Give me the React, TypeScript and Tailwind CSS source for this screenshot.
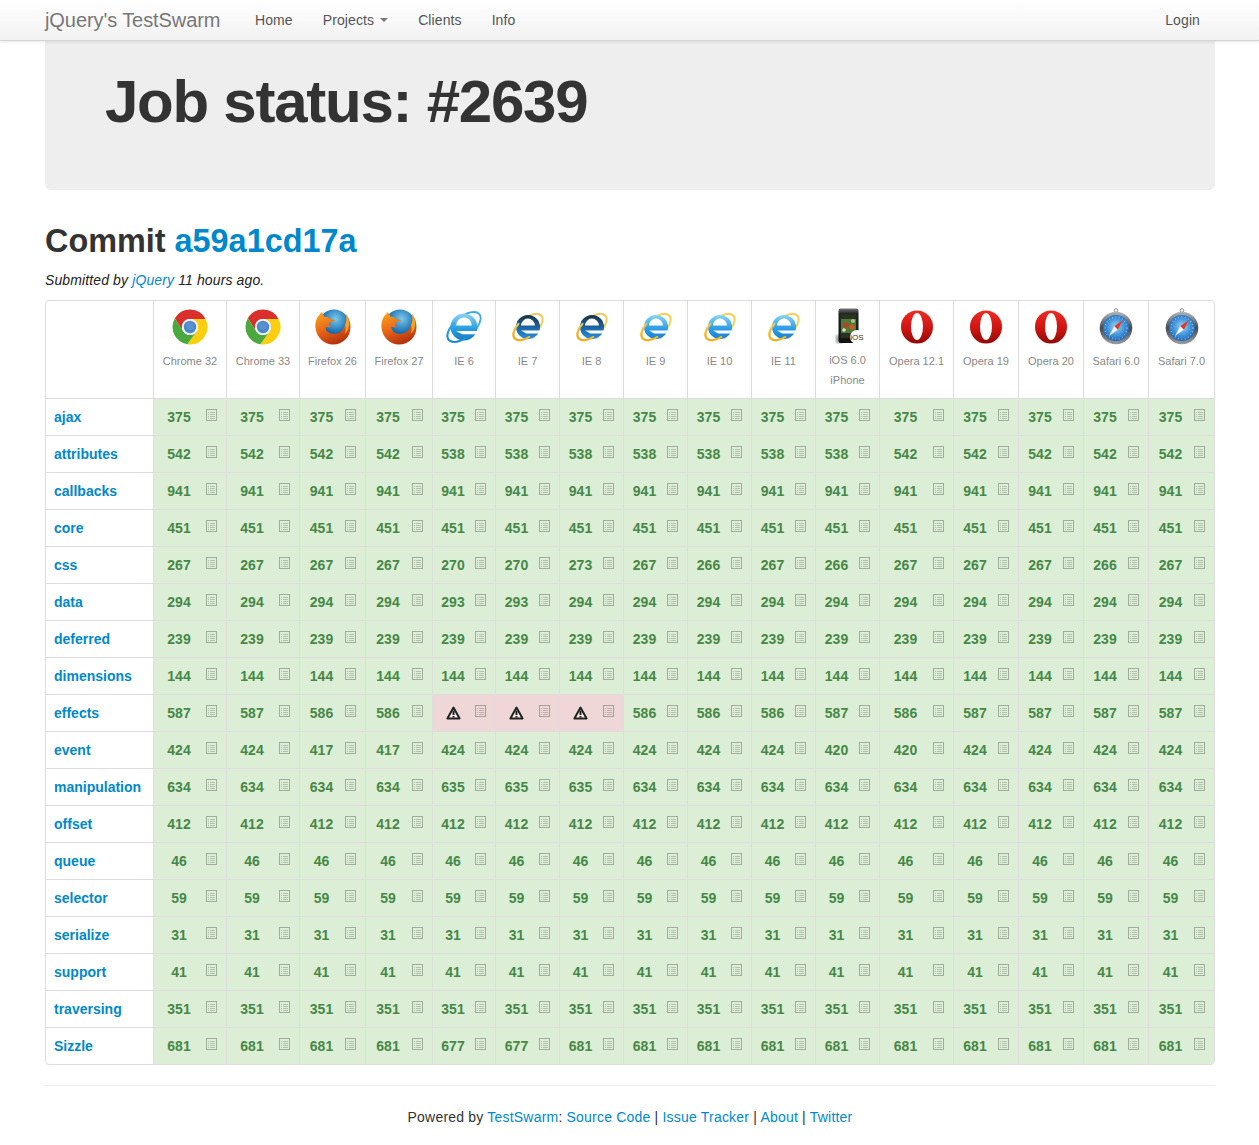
const F = 'fail';

const BROWSERS = [
    { name: 'Chrome 32', logo: 'chrome', w: 73 },
    { name: 'Chrome 33', logo: 'chrome', w: 73 },
    { name: 'Firefox 26', logo: 'firefox', w: 66 },
    { name: 'Firefox 27', logo: 'firefox', w: 67 },
    { name: 'IE 6', logo: 'ie6', w: 63 },
    { name: 'IE 7', logo: 'ie7', w: 64 },
    { name: 'IE 8', logo: 'ie7', w: 64 },
    { name: 'IE 9', logo: 'ie9', w: 64 },
    { name: 'IE 10', logo: 'ie9', w: 64 },
    { name: 'IE 11', logo: 'ie9', w: 64 },
    { name: 'iOS 6.0', sub: 'iPhone', logo: 'ios', w: 64 },
    { name: 'Opera 12.1', logo: 'opera', w: 74 },
    { name: 'Opera 19', logo: 'opera', w: 65 },
    { name: 'Opera 20', logo: 'opera', w: 65 },
    { name: 'Safari 6.0', logo: 'safari', w: 65 },
    { name: 'Safari 7.0', logo: 'safari', w: 66 },
];

const same = (n: number) => Array<number | string>(16).fill(n);

const ROWS: { name: string; cells: (number | string)[] }[] = [
    { name: 'ajax', cells: same(375) },
    { name: 'attributes', cells: [542, 542, 542, 542, 538, 538, 538, 538, 538, 538, 538, 542, 542, 542, 542, 542] },
    { name: 'callbacks', cells: same(941) },
    { name: 'core', cells: same(451) },
    { name: 'css', cells: [267, 267, 267, 267, 270, 270, 273, 267, 266, 267, 266, 267, 267, 267, 266, 267] },
    { name: 'data', cells: [294, 294, 294, 294, 293, 293, 294, 294, 294, 294, 294, 294, 294, 294, 294, 294] },
    { name: 'deferred', cells: same(239) },
    { name: 'dimensions', cells: same(144) },
    { name: 'effects', cells: [587, 587, 586, 586, F, F, F, 586, 586, 586, 587, 586, 587, 587, 587, 587] },
    { name: 'event', cells: [424, 424, 417, 417, 424, 424, 424, 424, 424, 424, 420, 420, 424, 424, 424, 424] },
    { name: 'manipulation', cells: [634, 634, 634, 634, 635, 635, 635, 634, 634, 634, 634, 634, 634, 634, 634, 634] },
    { name: 'offset', cells: same(412) },
    { name: 'queue', cells: same(46) },
    { name: 'selector', cells: same(59) },
    { name: 'serialize', cells: same(31) },
    { name: 'support', cells: same(41) },
    { name: 'traversing', cells: same(351) },
    { name: 'Sizzle', cells: [681, 681, 681, 681, 677, 677, 681, 681, 681, 681, 681, 681, 681, 681, 681, 681] },
];

const ListIcon = () => (
    <svg width="11" height="12" viewBox="0 0 11 12" className="shrink-0 mb-[5px] opacity-35">
        <rect x="0.5" y="0.5" width="10" height="11" fill="none" stroke="#333" />
        <path d="M2 3.5h1M2 5.500h1M2 7.500h1M2 9.500h1" stroke="#333" strokeOpacity="0.7" />
        <path d="M4 3.500h5M4 5.500h5M4 7.500h5M4 9.500h5" stroke="#333" strokeOpacity="0.7" />
    </svg>
);

const WarnIcon = () => (
    <svg width="15" height="14" viewBox="0 0 15 14">
        <path d="M7.5 1.5 L13.6 12.5 H1.4 Z" fill="#fff" fillOpacity="0.5" stroke="#222" strokeWidth="2" strokeLinejoin="round" />
        <path d="M7.5 4.5v4.5M7.5 10v1.500" stroke="#222" strokeWidth="2" />
    </svg>
);

const Chrome = () => (
    <svg width="40" height="40" viewBox="0 0 40 40">
        <path d="M35.56 12A17.5 17.5 0 0 0 4.84 11.25L13.07 24A8 8 0 0 1 20 12Z" fill="#d9302c" />
        <path d="M35.56 12A17.5 17.5 0 0 1 17.3 37.3L26.93 24A8 8 0 0 0 20 12Z" fill="#fbcf0d" />
        <path d="M4.84 11.25A17.5 17.5 0 0 0 17.3 37.3L26.93 24A8 8 0 0 1 13.07 24Z" fill="#4aa83f" />
        <circle cx="20" cy="20" r="8" fill="#f2f2f2" />
        <circle cx="20" cy="20" r="6.2" fill="#4b86c7" />
        <circle cx="20" cy="19" r="4" fill="#5f9ad8" opacity="0.6" />
    </svg>
);

const Firefox = () => (
    <svg width="40" height="40" viewBox="0 0 40 40">
        <defs>
            <radialGradient id="ffGlobe" cx="0.55" cy="0.3" r="0.75">
                <stop offset="0" stopColor="#7cc9ea" />
                <stop offset="0.55" stopColor="#1f74b5" />
                <stop offset="1" stopColor="#10366f" />
            </radialGradient>
            <linearGradient id="ffFox" x1="0.1" y1="0" x2="0.5" y2="1">
                <stop offset="0" stopColor="#f9a51f" />
                <stop offset="0.5" stopColor="#ea6a18" />
                <stop offset="1" stopColor="#b5330e" />
            </linearGradient>
        </defs>
        <circle cx="21" cy="18" r="15.500" fill="url(#ffGlobe)" />
        <path
            d="M9 5C3 10 2 16 2.500 21C3.500 30 11 37.500 20 37.500C30 37.500 37.500 30 37.500 20C37.500 15 36 11 33 7C34 12 33.500 15 32 18C31 23 26 27 21 27C16 27 12.500 24 12.500 20C14 20 16 21 18 20C16.500 19 15.500 17.500 16 16L22 13.500C21 12.500 18.500 12 16.500 12C16 10 13 9.500 11.500 10C11 8.500 10 7 9 5Z"
            fill="url(#ffFox)"
        />
        <path d="M33 7C34 12 33.500 15 32 18C33 21 33 24 31.500 27C35.500 24 36.500 19 36 15C35.500 12 34.500 9 33 7Z" fill="#f9c12e" opacity="0.7" />
    </svg>
);

type IeProps = { id: string; top: string; mid: string; bot: string; ring: string; ring2: string; r: number; rx: number; ry: number; sw: number };

const IeLogo = ({ id, top, mid, bot, ring, ring2, r, rx, ry, sw }: IeProps) => (
    <svg width="40" height="40" viewBox="0 0 40 40">
        <defs>
            <linearGradient id={`${id}e`} x1="0" y1="0" x2="0" y2="1">
                <stop offset="0" stopColor={top} />
                <stop offset="0.55" stopColor={mid} />
                <stop offset="1" stopColor={bot} />
            </linearGradient>
            <linearGradient id={`${id}r`} x1="0" y1="1" x2="1" y2="0">
                <stop offset="0" stopColor={ring2} />
                <stop offset="1" stopColor={ring} />
            </linearGradient>
        </defs>
        {/* ring goes behind the disc, its left end comes back over it */}
        <g transform="rotate(-40 20 20)">
            <ellipse cx="20" cy="20" rx={rx} ry={ry} fill="none" stroke={ring} strokeWidth={sw} />
        </g>
        <circle cx="20" cy="20" r={r} fill={`url(#${id}e)`} />
        <path d={`M${20 - r * 0.58} ${20 - r * 0.12}a${r * 0.58} ${r * 0.58} 0 0 1 ${r * 1.16} 0Z`} fill="#fff" />
        <path d={`M${20 - r * 0.58} ${20 + r * 0.3}h${r * 1.7}v${r * 0.24}h-${r * 1.25}Z`} fill="#fff" />
        <g transform="rotate(-40 20 20)">
            <path
                d={`M${20 - rx * 0.3} ${20 + ry * 0.954}A${rx} ${ry} 0 0 1 ${20 - rx * 0.3} ${20 - ry * 0.954}`}
                fill="none"
                stroke={`url(#${id}r)`}
                strokeWidth={sw}
                strokeLinecap="round"
            />
        </g>
    </svg>
);

const Ie6 = () => <IeLogo id="ie6" top="#8ed4f4" mid="#2aa0e3" bot="#1479c4" ring="#3fa9e8" ring2="#1280c8" r={13.5} rx={20} ry={10} sw={1.8} />;
const Ie7 = () => <IeLogo id="ie7" top="#1b3047" mid="#1d68a8" bot="#2a8fd6" ring="#f0c95e" ring2="#e8a514" r={12} rx={17.5} ry={9} sw={2} />;
const Ie9 = () => <IeLogo id="ie9" top="#8ad6f6" mid="#2f9de7" bot="#1a7fd3" ring="#f4cf55" ring2="#eda90f" r={12} rx={17.5} ry={9} sw={2} />;

const Ios = () => (
    <svg width="40" height="40" viewBox="0 0 40 40">
        <defs>
            <filter id="iosBlur">
                <feGaussianBlur stdDeviation="0.7" />
            </filter>
            <filter id="iosShadow">
                <feGaussianBlur stdDeviation="1.5" />
            </filter>
            <linearGradient id="iosBody" x1="0" y1="0" x2="0" y2="1">
                <stop offset="0" stopColor="#777" />
                <stop offset="0.15" stopColor="#222" />
                <stop offset="1" stopColor="#111" />
            </linearGradient>
        </defs>
        <rect x="8" y="28" width="6" height="8" fill="#000" opacity="0.4" filter="url(#iosShadow)" />
        <rect x="10.500" y="1.500" width="20" height="34.500" rx="2" fill="url(#iosBody)" />
        <rect x="12.500" y="7" width="16" height="24" fill="#27331f" />
        <g filter="url(#iosBlur)">
            <rect x="13" y="12" width="15" height="14" fill="#4f7a3a" />
            <circle cx="18" cy="18" r="2.500" fill="#c93a1c" />
            <circle cx="24" cy="20" r="2.500" fill="#d9541f" />
            <circle cx="16" cy="23" r="1.800" fill="#e8e0c8" />
            <circle cx="25" cy="14" r="2" fill="#a8c48a" />
        </g>
        <circle cx="29" cy="30" r="7" fill="#fff" />
        <text x="29" y="33" textAnchor="middle" fontSize="8" fill="#333" fontFamily="'Liberation Sans', sans-serif">iOS</text>
    </svg>
);

const Opera = () => (
    <svg width="40" height="40" viewBox="0 0 40 40">
        <defs>
            <linearGradient id="operaRed" x1="0" y1="0" x2="0" y2="1">
                <stop offset="0" stopColor="#ee2b24" />
                <stop offset="0.6" stopColor="#c9130f" />
                <stop offset="1" stopColor="#8f0a08" />
            </linearGradient>
        </defs>
        <ellipse cx="20" cy="20" rx="16" ry="16.500" fill="url(#operaRed)" />
        <ellipse cx="20" cy="19.500" rx="6" ry="13.500" fill="#fff" />
    </svg>
);

const Safari = () => (
    <svg width="40" height="40" viewBox="0 0 40 40">
        <defs>
            <linearGradient id="safRim" x1="0" y1="0" x2="0" y2="1">
                <stop offset="0" stopColor="#b4b8bd" />
                <stop offset="0.5" stopColor="#484c52" />
                <stop offset="1" stopColor="#9a9da2" />
            </linearGradient>
            <radialGradient id="safFace" cx="0.5" cy="0.45" r="0.6">
                <stop offset="0" stopColor="#9ad4f2" />
                <stop offset="0.6" stopColor="#3a8ed6" />
                <stop offset="1" stopColor="#1c5aa6" />
            </radialGradient>
        </defs>
        <circle cx="20" cy="3.500" r="1.800" fill="none" stroke="#888" />
        <circle cx="20" cy="21" r="16.300" fill="url(#safRim)" />
        <circle cx="20" cy="21" r="13" fill="url(#safFace)" />
        <circle cx="20" cy="21" r="11" fill="none" stroke="#fff" strokeWidth="1.500" strokeDasharray="0.8 2.6" opacity="0.5" />
        <path d="M27 13L21.800 22.800L18.200 19.200Z" fill="#e2382c" />
        <path d="M13 29L18.200 19.200L21.800 22.800Z" fill="#f2f2f2" />
    </svg>
);

const LOGOS: Record<string, () => React.JSX.Element> = {
    chrome: Chrome,
    firefox: Firefox,
    ie6: Ie6,
    ie7: Ie7,
    ie9: Ie9,
    ios: Ios,
    opera: Opera,
    safari: Safari,
};

const Cell = ({ value }: { value: number | string }) => {
    const failed = value === F;
    return (
        <td className={`border-l border-t border-[#ddd] p-0 h-[37px] ${failed ? 'bg-[#efd7d8]' : 'bg-[#dceed6]'}`}>
            <div className="flex items-center pr-[9px]">
                <span className="flex-1 mr-[2px] flex justify-center text-center text-[14px] font-bold text-[#468847]">
                    {failed ? <WarnIcon /> : value}
                </span>
                <ListIcon />
            </div>
        </td>
    );
};

const App = () => {
    return (
        <div className="min-h-[1145px] bg-white text-[#333] text-[14px] font-['Liberation_Sans',Arial,sans-serif]">
            {/* Navbar */}
            <nav className="h-[41px] flex items-center pl-[45px] pr-[59px] border-b border-[#d4d4d4] bg-gradient-to-b from-white to-[#f2f2f2] shadow-[0_1px_3px_rgba(0,0,0,0.1)] relative">
                <a className="text-[20px] text-[#777] w-[210px] tracking-[-0.08px]">jQuery's TestSwarm</a>
                <div className="flex items-center gap-[30px] text-[#555] tracking-[0.1px]">
                    <a>Home</a>
                    <a className="flex items-center">
                        Projects
                        <span className="ml-[6px] w-0 h-0 border-x-[4px] border-x-transparent border-t-[4px] border-t-[#777]" />
                    </a>
                    <a>Clients</a>
                    <a>Info</a>
                </div>
                <a className="ml-auto text-[#555] tracking-[0.1px]">Login</a>
            </nav>

            <main className="ml-[45px] w-[1170px]">
                {/* Hero */}
                <div className="h-[149px] bg-[#eee] rounded-b-md pl-[60px] pt-[26px]">
                    <h1 className="text-[60px] leading-[70px] font-bold tracking-[-1.25px] text-[#333]">Job status: #2639</h1>
                </div>

                <h2 className="mt-[31px] text-[32.4px] leading-[40px] font-bold text-[#333]">
                    Commit <a className="text-[#0088cc]">a59a1cd17a</a>
                </h2>
                <p className="mt-[9px] leading-[20px] italic text-[#222] tracking-[0.12px]">
                    Submitted by <a className="text-[#0088cc]">jQuery</a> 11 hours ago.
                </p>

                {/* Results table */}
                <div className="mt-[10px] border border-[#ddd] rounded overflow-hidden">
                    <table className="table-fixed w-[1168px] border-separate border-spacing-0">
                        <colgroup>
                            <col className="w-[107px]" />
                            {BROWSERS.map((b, i) => (
                                <col key={i} style={{ width: b.w }} />
                            ))}
                        </colgroup>
                        <thead>
                            <tr>
                                <th className="h-[97px] p-0" />
                                {BROWSERS.map((b) => {
                                    const Logo = LOGOS[b.logo];
                                    return (
                                        <th key={b.name} className="border-l border-[#ddd] p-0 align-top font-normal">
                                            <div className="flex flex-col items-center pt-[6px] text-[11px] leading-[20px] text-[#888]">
                                                <Logo />
                                                <span className={b.sub ? 'mt-[3px]' : 'mt-[4px]'}>{b.name}</span>
                                                {b.sub && <span>{b.sub}</span>}
                                            </div>
                                        </th>
                                    );
                                })}
                            </tr>
                        </thead>
                        <tbody>
                            {ROWS.map((row) => (
                                <tr key={row.name}>
                                    <td className="border-t border-[#ddd] pl-[8px] p-0 text-[14px] font-bold text-[#0088cc]">
                                        {row.name}
                                    </td>
                                    {row.cells.map((c, i) => (
                                        <Cell key={i} value={c} />
                                    ))}
                                </tr>
                            ))}
                        </tbody>
                    </table>
                </div>

                {/* Footer */}
                <footer className="mt-[20px] border-t border-[#eee] pt-[21px] text-center leading-[20px] text-[#333] tracking-[0.2px]">
                    Powered by <a className="text-[#0088cc]">TestSwarm</a>: <a className="text-[#0088cc]">Source Code</a> | <a className="text-[#0088cc]">Issue Tracker</a> | <a className="text-[#0088cc]">About</a> | <a className="text-[#0088cc]">Twitter</a>
                </footer>
            </main>
        </div>
    );
};

export default App;
